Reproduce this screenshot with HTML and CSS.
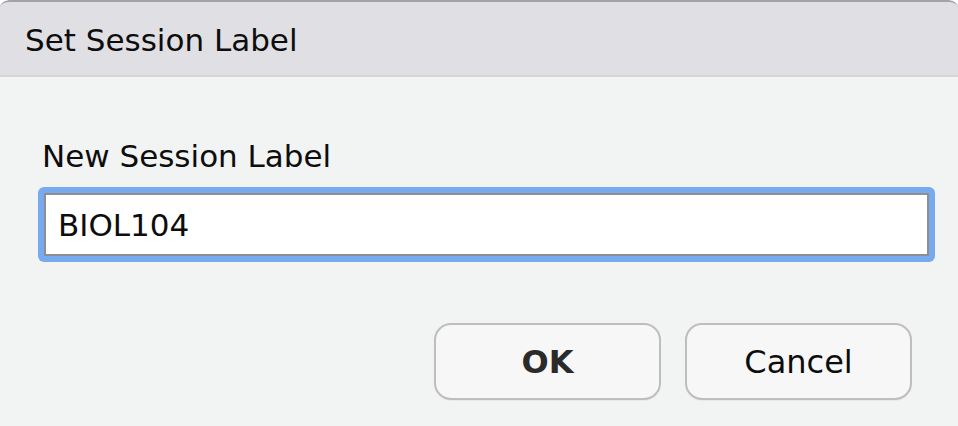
FILE: index.html
```html
<!DOCTYPE html>
<html>
<head>
<meta charset="utf-8">
<link rel="stylesheet" href="styles.css">
</head>
<body>
<div class="window">
  <div class="titlebar"><span class="title">Set Session Label</span></div>
  <div class="content">
    <label class="field-label" for="label">New Session Label</label>
    <div class="field-ring"><input id="label" class="field" type="text" value="BIOL104"></div>
    <div class="buttons">
      <button class="btn btn-default">OK</button>
      <button class="btn">Cancel</button>
    </div>
  </div>
</div>
</body>
</html>
```
FILE: styles.css
```css
html, body {
  margin: 0;
  padding: 0;
  background: #ffffff;
}
body {
  width: 958px;
  height: 426px;
  overflow: hidden;
  font-family: "DejaVu Sans", "Verdana", sans-serif;
  color: #111;
}
.window {
  width: 960px;
  height: 428px;
  margin-left: -1px;
  display: flex;
  flex-direction: column;
  background: #f2f3f3;
  border-radius: 10px 10px 0 0;
  overflow: hidden;
}
.titlebar {
  height: 73px;
  flex: none;
  background: #e0e0e4;
  border-top: 2px solid #a3a3a5;
  border-bottom: 2px solid #d4d5d8;
  border-radius: 10px 10px 0 0;
  display: flex;
  align-items: center;
  padding-left: 26px;
}
.title {
  font-size: 31px;
  line-height: 36px;
  margin-top: 2px;
  color: #0d0d0d;
}
.content {
  flex: 1;
  display: flex;
  flex-direction: column;
  align-items: flex-start;
  padding: 61px 0 0 39px;
}
.field-label {
  font-size: 31px;
  line-height: 36px;
  margin-left: 4px;
  color: #0d0d0d;
}
.field-ring {
  margin-top: 13px;
  padding: 6px;
  background: #78aaf0;
  border-radius: 6px;
}
.field {
  display: block;
  box-sizing: border-box;
  width: 885px;
  height: 63px;
  margin: 0;
  border: 2px solid #8e8e8e;
  background: #fff;
  padding: 0 0 0 12px;
  font-family: "DejaVu Sans", sans-serif;
  font-size: 31px;
  color: #0d0d0d;
  outline: none;
}
.buttons {
  align-self: stretch;
  display: flex;
  justify-content: flex-end;
  gap: 24px;
  padding-right: 47px;
  margin-top: 61px;
}
.btn {
  box-sizing: border-box;
  width: 227px;
  height: 77px;
  border: 2px solid #bebebe;
  border-radius: 17px;
  background: #f7f7f8;
  font-family: "DejaVu Sans", sans-serif;
  font-size: 32px;
  color: #0d0d0d;
  padding: 0;
  box-shadow: 0 1px 1px rgba(0,0,0,0.04);
}
.btn-default {
  font-weight: bold;
  color: #2a2a2a;
}
```
